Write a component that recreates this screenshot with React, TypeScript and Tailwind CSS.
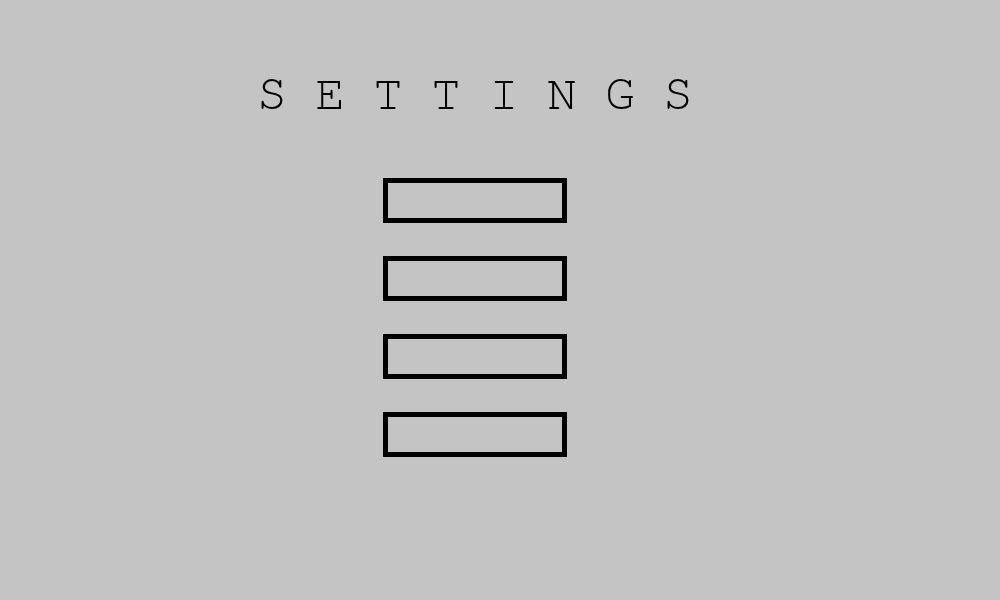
export default function App() {
  const rows = [0, 1, 2, 3];

  return (
    <div className="w-[1000px] h-[600px] bg-[#c4c4c4] overflow-hidden">
      <div className="w-[950px] flex flex-col items-center pt-[69px]">
        <h1 className="font-['FreeMono',monospace] text-[50px] leading-none font-normal text-black tracking-[28px] mr-[-28px]">
          SETTINGS
        </h1>

        {/* Option slots */}
        <div className="flex flex-col gap-[33px] mt-[59px]">
          {rows.map((i) => (
            <div key={i} className="w-[184px] h-[45px] border-[5px] border-black" />
          ))}
        </div>
      </div>
    </div>
  );
}
